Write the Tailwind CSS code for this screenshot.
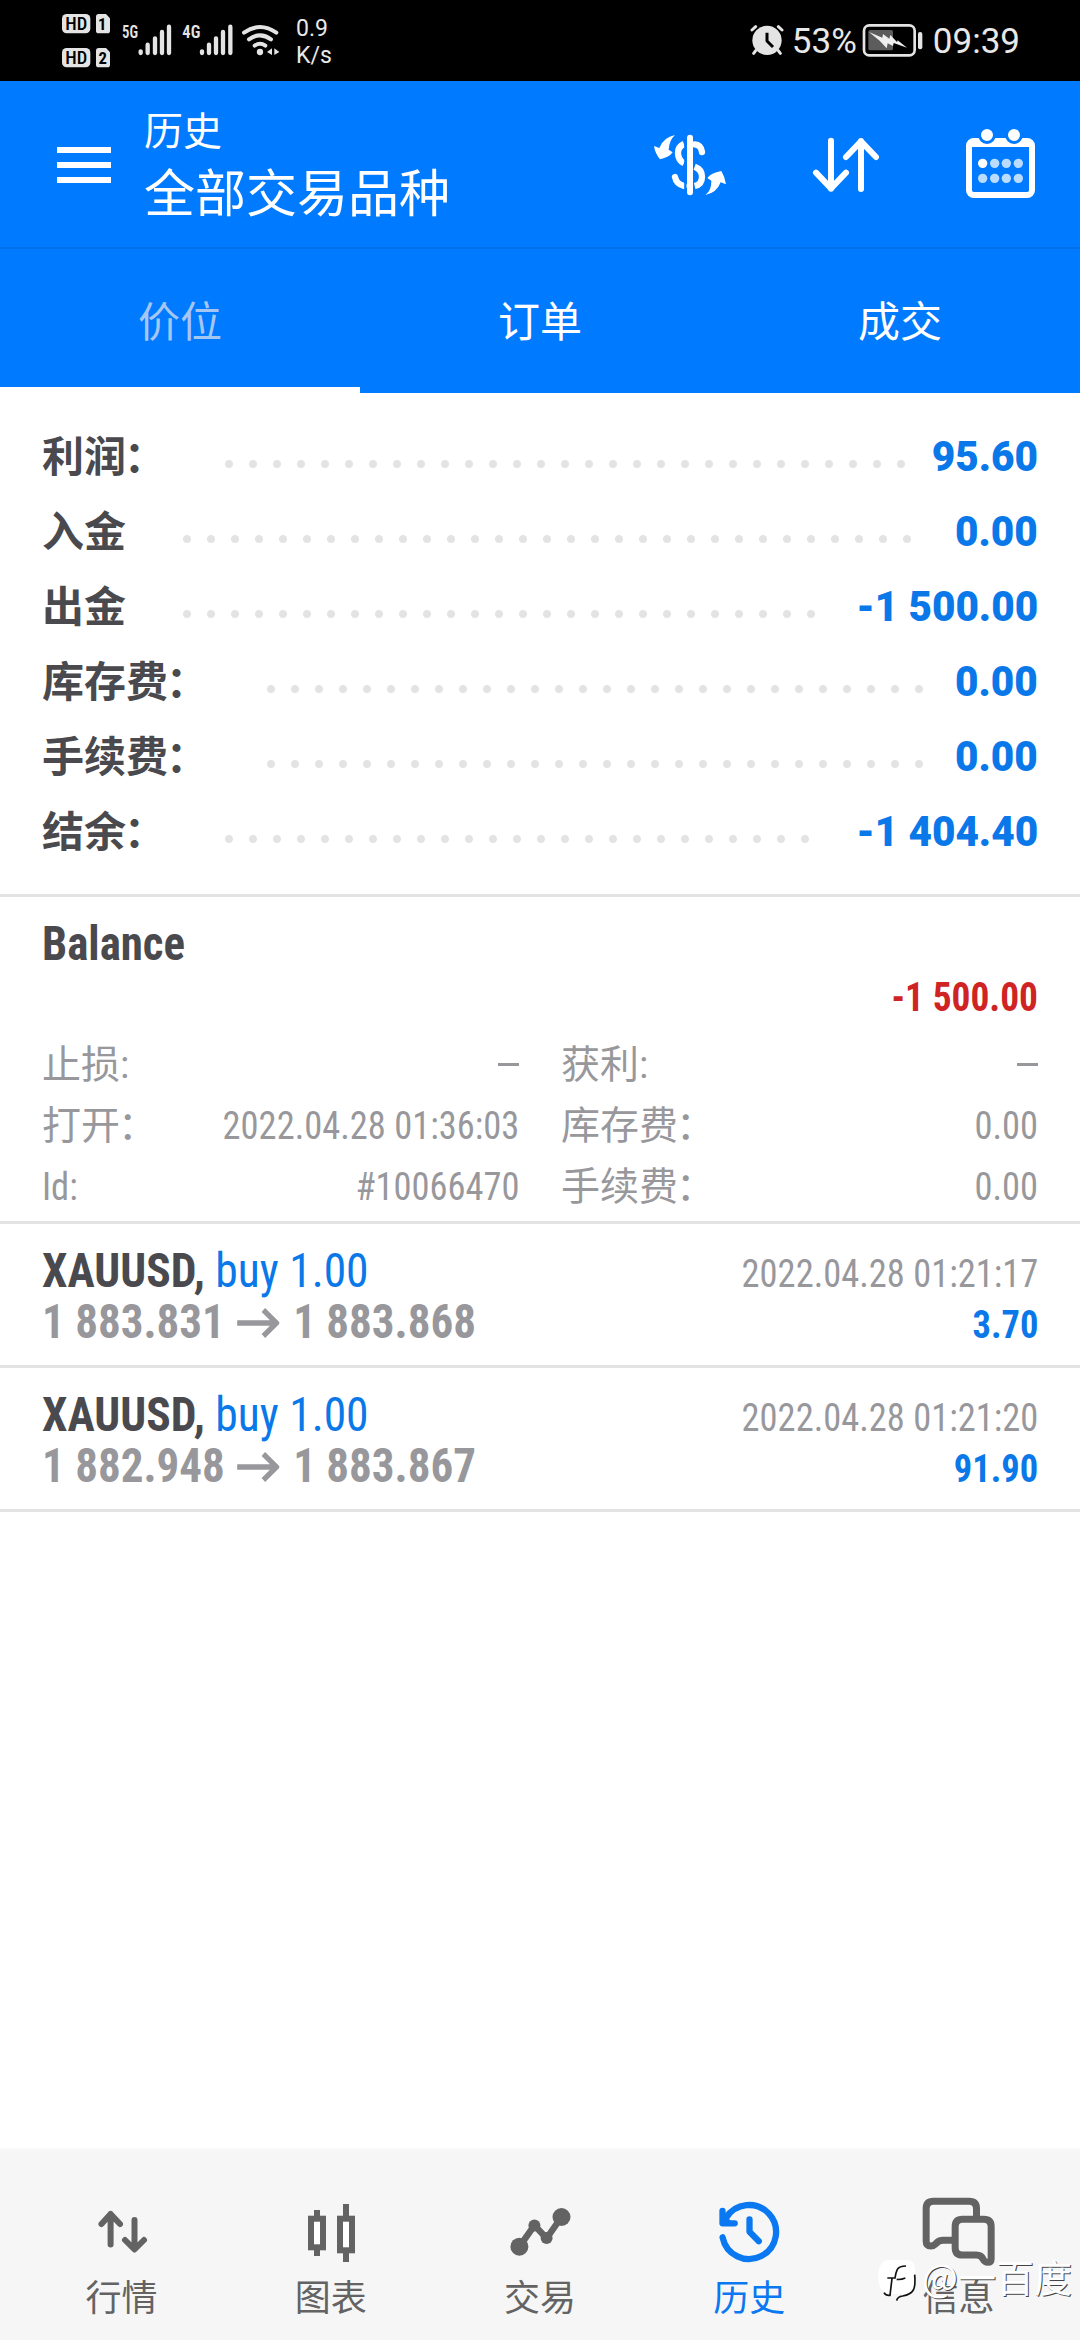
<!DOCTYPE html>
<html lang="zh-CN">
<head>
<meta charset="utf-8">
<title>历史</title>
<script src="https://cdn.jsdelivr.net/npm/@tailwindcss/browser@4"></script>
</head>
<body class="bg-white">
<div class="flex h-[2340px] w-[1080px] flex-col overflow-hidden bg-white font-['Roboto','Noto_Sans_CJK_SC',sans-serif] text-[#4a4a4e]">

  <!-- Status bar -->
  <div class="flex h-[81px] shrink-0 items-start bg-black text-[#e8e8e8]">
    <svg class="mt-[10px] ml-[60px] h-[60px] w-[52px]" viewBox="60 30 156 180">
      <g fill="#e4e4e4">
        <rect x="66" y="42" width="85" height="58" rx="14"/>
        <path d="M176 42h22l12 13v37q0 8-8 8h-26q-8 0-8-8v-42q0-8 8-8z"/>
        <rect x="66" y="144" width="85" height="58" rx="14"/>
        <path d="M176 144h22l12 13v37q0 8-8 8h-26q-8 0-8-8v-42q0-8 8-8z"/>
      </g>
      <g fill="#000" font-family="Roboto Condensed, Roboto" font-weight="500" font-size="53" text-anchor="middle">
        <text x="109" y="90" textLength="66" lengthAdjust="spacingAndGlyphs">HD</text>
        <text x="109" y="192" textLength="66" lengthAdjust="spacingAndGlyphs">HD</text>
        <text x="187" y="90" font-weight="700" font-size="50">1</text>
        <text x="188" y="192" font-weight="700" font-size="50">2</text>
      </g>
    </svg>
    <svg class="mt-[20px] ml-[8px] h-[40px] w-[53px]" viewBox="240 60 159 120">
      <text x="246" y="114" fill="#e4e4e4" font-family="Roboto Condensed, Roboto" font-weight="600" font-size="55" textLength="48" lengthAdjust="spacingAndGlyphs">5G</text>
      <path d="M302 154v5M323 134v25M345 115v44M366 96v63M387 80v79" stroke="#e4e4e4" stroke-width="13" stroke-linecap="round"/>
    </svg>
    <svg class="mt-[20px] ml-[7px] h-[40px] w-[55px]" viewBox="420 60 165 120">
      <text x="427" y="114" fill="#e4e4e4" font-family="Roboto Condensed, Roboto" font-weight="600" font-size="55" textLength="54" lengthAdjust="spacingAndGlyphs">4G</text>
      <path d="M486 154v5M507 134v25M528 115v44M549 96v63M571 80v79" stroke="#e4e4e4" stroke-width="13" stroke-linecap="round"/>
    </svg>
    <svg class="mt-[20px] ml-[5px] h-[40px] w-[42px]" viewBox="600 60 126 120">
      <g fill="none" stroke="#e4e4e4" stroke-width="12" stroke-linecap="round">
        <path d="M612 98Q660 64 709 98M627 118Q660 94 693 118M644 137Q660 126 676 137"/>
      </g>
      <circle cx="660" cy="156" r="9.500" fill="#e4e4e4"/>
      <path d="M696 145v20l-15-9zM703 145v20l15-9z" fill="#e4e4e4"/>
    </svg>
    <div class="mt-[15px] ml-[14px] text-[23px] leading-[27px]">0.9<br>K/s</div>
    <svg class="mt-[22px] ml-auto h-[36px] w-[36px]" viewBox="54 66 108 108">
      <circle cx="108" cy="121" r="44" fill="#e4e4e4"/>
      <path d="M63 90l11-10M142 80l11 10M74 152l-6 8M142 152l6 8" stroke="#e4e4e4" stroke-width="9" stroke-linecap="round"/>
      <path d="M108 98v25l18 18" fill="none" stroke="#000" stroke-width="9" stroke-linejoin="round"/>
    </svg>
    <div class="mt-[22px] ml-[7px] w-[69px] text-[35px] leading-[40px]">53%</div>
    <svg class="mt-[22px] h-[36px] w-[64px]" viewBox="390 66 192 108">
      <rect x="399" y="76" width="152" height="90" rx="16" fill="none" stroke="#e4e4e4" stroke-width="8"/>
      <rect x="412" y="90" width="74" height="61" rx="5" fill="#5c5c5c"/>
      <path d="M414 96L454 113 456 102 475 116 478 105 498 126 500 121 528 143 488 129 486 138 470 130 467 145 446 122z" fill="#efefef"/>
      <rect x="561" y="96" width="13" height="52" rx="6" fill="#e4e4e4"/>
    </svg>
    <div class="mt-[22px] mr-[60px] ml-[8px] text-[35px] leading-[40px]">09:39</div>
  </div>

  <!-- App bar -->
  <div class="flex h-[166px] shrink-0 items-center bg-[#007aff] pt-[2px] text-white">
    <div class="ml-[57px] flex w-[54px] flex-col gap-[9px]">
      <div class="h-[6px] bg-white"></div>
      <div class="h-[6px] bg-white"></div>
      <div class="h-[6px] bg-white"></div>
    </div>
    <div class="ml-[33px]">
      <div class="text-[39px] leading-[56px]">历史</div>
      <div class="pt-[4px] text-[51px] leading-[62px]">全部交易品种</div>
    </div>
    <svg class="ml-auto h-[80px] w-[80px]" viewBox="150 135 240 240">
      <g fill="none" stroke="#fff" stroke-width="19" stroke-linecap="round">
        <path d="M270 173v164" stroke-width="18"/>
        <path d="M284 193Q303 194 306 216"/>
        <path d="M252 192Q234 200 234 219Q234 240 252 250" stroke-linecap="butt"/>
        <path d="M284 260Q306 268 306 290Q306 313 284 318" stroke-linecap="butt"/>
        <path d="M225 291Q229 312 252 318"/>
      </g>
      <g fill="#fff">
        <path d="M225 165Q208 180 206 209L218 217Q208 232 180 238Q166 222 162 198L178 204Q190 172 225 165z"/>
        <path d="M316 345Q335 331 334 302L322 294Q332 279 364 273Q374 289 378 313L362 307Q350 339 316 345z"/>
      </g>
      <path d="M256 170v175" stroke="#007aff" stroke-width="7"/>
    </svg>
    <svg class="ml-[76px] h-[80px] w-[80px]" viewBox="618 135 240 240">
      <path d="M693 182v144M648 278l45 47 45-47M783 327V183M738 231l45-47 45 47" fill="none" stroke="#fff" stroke-width="18" stroke-linecap="round" stroke-linejoin="round"/>
    </svg>
    <svg class="mr-[40px] ml-[74px] h-[80px] w-[80px]" viewBox="1080 135 240 240">
      <rect x="1107" y="183" width="189" height="162" rx="14" fill="none" stroke="#fff" stroke-width="18"/>
      <path d="M1107 183h189v18h-189z" fill="#fff"/>
      <path d="M1116 222q0-12 12-12h147q12 0 12 12v30h-171z" fill="#007aff"/>
      <g fill="#fff" stroke="#007aff" stroke-width="9"><circle cx="1161" cy="165" r="22.500"/><circle cx="1242" cy="165" r="22.500"/></g>
      <circle cx="1148" cy="250" r="14" fill="#fff"/>
      <g fill="#b9dcff"><circle cx="1184" cy="250" r="14"/><circle cx="1219" cy="250" r="14"/><circle cx="1255" cy="250" r="14"/><circle cx="1148" cy="295" r="14"/><circle cx="1184" cy="295" r="14"/><circle cx="1219" cy="295" r="14"/><circle cx="1255" cy="295" r="14"/></g>
    </svg>
  </div>

  <!-- Tabs -->
  <div class="grid h-[146px] shrink-0 grid-cols-3 border-t-2 border-[#0070ea] bg-[#007aff] text-center text-[42px] leading-[138px] text-white">
    <div class="h-[144px] border-b-6 border-white pt-[5px] text-[#a6c6f2]">价位</div>
    <div class="pt-[5px]">订单</div>
    <div class="pt-[5px]">成交</div>
  </div>

  <!-- Summary -->
  <div class="shrink-0 border-b-3 border-[#e3e3e3] px-[42px] pt-[25px] pb-[26px] text-[42px] leading-[75px] font-bold">
    <div class="flex h-[75px]"><span class="mr-[49px] pt-[2px]">利润<span class="mr-0.5 -ml-0.5">：</span></span><i class="mt-[34px] h-[24px] w-[696px] bg-[radial-gradient(circle,#e3e3e3_3.5px,transparent_4.5px)] bg-[length:24px_24px]"></i><b class="ml-auto origin-right scale-x-[0.965] pt-px text-[#0a78e8]">95.60</b></div>
    <div class="flex h-[75px]"><span class="mr-[49px] pt-[2px]">入金</span><i class="mt-[34px] h-[24px] w-[744px] bg-[radial-gradient(circle,#e3e3e3_3.5px,transparent_4.5px)] bg-[length:24px_24px]"></i><b class="ml-auto origin-right scale-x-[0.965] pt-px text-[#0a78e8]">0.00</b></div>
    <div class="flex h-[75px]"><span class="mr-[49px] pt-[2px]">出金</span><i class="mt-[34px] h-[24px] w-[648px] bg-[radial-gradient(circle,#e3e3e3_3.5px,transparent_4.5px)] bg-[length:24px_24px]"></i><b class="ml-auto origin-right scale-x-[0.965] pt-px text-[#0a78e8]">-1 500.00</b></div>
    <div class="flex h-[75px]"><span class="mr-[49px] pt-[2px]">库存费<span class="mr-0.5 -ml-0.5">：</span></span><i class="mt-[34px] h-[24px] w-[672px] bg-[radial-gradient(circle,#e3e3e3_3.5px,transparent_4.5px)] bg-[length:24px_24px]"></i><b class="ml-auto origin-right scale-x-[0.965] pt-px text-[#0a78e8]">0.00</b></div>
    <div class="flex h-[75px]"><span class="mr-[49px] pt-[2px]">手续费<span class="mr-0.5 -ml-0.5">：</span></span><i class="mt-[34px] h-[24px] w-[672px] bg-[radial-gradient(circle,#e3e3e3_3.5px,transparent_4.5px)] bg-[length:24px_24px]"></i><b class="ml-auto origin-right scale-x-[0.965] pt-px text-[#0a78e8]">0.00</b></div>
    <div class="flex h-[75px]"><span class="mr-[49px] pt-[2px]">结余<span class="mr-0.5 -ml-0.5">：</span></span><i class="mt-[34px] h-[24px] w-[600px] bg-[radial-gradient(circle,#e3e3e3_3.5px,transparent_4.5px)] bg-[length:24px_24px]"></i><b class="ml-auto origin-right scale-x-[0.965] pt-px text-[#0a78e8]">-1 404.40</b></div>
  </div>

  <!-- Balance operation -->
  <div class="h-[327px] shrink-0 border-b-3 border-[#e3e3e3] px-[42px] pt-[20px] font-['Roboto_Condensed','Noto_Sans_CJK_SC',sans-serif]">
    <div class="origin-left scale-x-[0.935] text-[48px] leading-[54px] font-bold">Balance</div>
    <div class="origin-right scale-x-[0.935] text-right text-[40px] leading-[54px] font-bold text-[#d02424]">-1 500.00</div>
    <div class="mt-[10px] grid grid-cols-2 gap-x-[42px] text-[39px] leading-[61px] text-[#98989c]">
      <div class="flex h-[61px] justify-between"><span>止损:</span><span class="mt-[28px] h-[3px] w-[21px] bg-[#98989c]"></span></div>
      <div class="flex h-[61px] justify-between"><span>获利:</span><span class="mt-[28px] h-[3px] w-[21px] bg-[#98989c]"></span></div>
      <div class="flex h-[61px] justify-between"><span>打开<span class="-ml-0.5">：</span></span><span class="origin-right scale-x-[0.935]">2022.04.28 01:36:03</span></div>
      <div class="flex h-[61px] justify-between"><span>库存费<span class="-ml-0.5">：</span></span><span class="origin-right scale-x-[0.935]">0.00</span></div>
      <div class="flex h-[61px] justify-between"><span class="origin-left scale-x-[0.935]">Id:</span><span class="origin-right scale-x-[0.935]">#10066470</span></div>
      <div class="flex h-[61px] justify-between"><span>手续费<span class="-ml-0.5">：</span></span><span class="origin-right scale-x-[0.935]">0.00</span></div>
    </div>
  </div>

  <!-- Positions -->
  <div class="h-[144px] shrink-0 border-b-3 border-[#e3e3e3] px-[42px] pt-[21px] font-['Roboto_Condensed',sans-serif] text-[48px] leading-[51px]">
    <div class="flex h-[51px] items-baseline justify-between">
      <span class="origin-left scale-x-[0.948]"><b class="font-bold">XAUUSD,</b> <span class="text-[#0a78e8]">buy 1.00</span></span>
      <span class="origin-right scale-x-[0.935] text-[39px] text-[#98989c]">2022.04.28 01:21:17</span>
    </div>
    <div class="flex h-[51px] items-baseline justify-between font-bold text-[#98989c]">
      <span class="flex origin-left scale-x-[0.938] items-center">1 883.831<svg class="mr-[15px] ml-[13px] h-[32px] w-[45px]" viewBox="0 0 45 32"><path d="M0 17h42M28 4l14 13-14 13" fill="none" stroke="#98989c" stroke-width="5.500"/></svg>1 883.868</span>
      <span class="origin-right scale-x-[0.935] text-[39px] text-[#0a78e8]">3.70</span>
    </div>
  </div>
  <div class="h-[144px] shrink-0 border-b-3 border-[#e3e3e3] px-[42px] pt-[21px] font-['Roboto_Condensed',sans-serif] text-[48px] leading-[51px]">
    <div class="flex h-[51px] items-baseline justify-between">
      <span class="origin-left scale-x-[0.948]"><b class="font-bold">XAUUSD,</b> <span class="text-[#0a78e8]">buy 1.00</span></span>
      <span class="origin-right scale-x-[0.935] text-[39px] text-[#98989c]">2022.04.28 01:21:20</span>
    </div>
    <div class="flex h-[51px] items-baseline justify-between font-bold text-[#98989c]">
      <span class="flex origin-left scale-x-[0.938] items-center">1 882.948<svg class="mr-[15px] ml-[13px] h-[32px] w-[45px]" viewBox="0 0 45 32"><path d="M0 17h42M28 4l14 13-14 13" fill="none" stroke="#98989c" stroke-width="5.500"/></svg>1 883.867</span>
      <span class="origin-right scale-x-[0.935] text-[39px] text-[#0a78e8]">91.90</span>
    </div>
  </div>

  <!-- Bottom navigation -->
  <div class="relative mt-auto grid h-[192px] shrink-0 grid-cols-5 border-t-2 border-[#fafafa] bg-[#f6f6f6] px-[17px] pt-[46px] text-[36px] leading-[54px] text-[#636363]">
    <div class="flex flex-col items-center">
      <svg class="h-[72px] w-[72px]" viewBox="0 0 72 72"><path d="M24.600 48.500V18M15.500 28l9.100-10L34 28M48.500 24v29M39 44l9.500 9.500L58 44" fill="none" stroke="#636363" stroke-width="6" stroke-linecap="round" stroke-linejoin="round"/></svg>
      <span class="pt-[4px]">行情</span>
    </div>
    <div class="flex flex-col items-center">
      <svg class="h-[72px] w-[72px]" viewBox="0 0 72 72"><path d="M22 14v46M51 8v58" stroke="#636363" stroke-width="6"/><rect x="16" y="22.700" width="12" height="28.600" fill="#fff" stroke="#636363" stroke-width="6"/><rect x="45" y="22.700" width="12" height="31.600" fill="#fff" stroke="#636363" stroke-width="6"/></svg>
      <span class="pt-[4px]">图表</span>
    </div>
    <div class="flex flex-col items-center">
      <svg class="h-[72px] w-[72px]" viewBox="0 0 72 72"><path d="M15.400 50.700l15-21.400 12.200 13 14.900-21.300" fill="none" stroke="#636363" stroke-width="6.500"/><g fill="#636363"><circle cx="15.400" cy="50.700" r="9"/><circle cx="57.500" cy="21" r="9"/><circle cx="30.400" cy="29.600" r="6"/><circle cx="42.600" cy="42" r="6"/></g></svg>
      <span class="pt-[4px]">交易</span>
    </div>
    <div class="flex flex-col items-center text-[#0a78f0]">
      <svg class="h-[72px] w-[72px]" viewBox="0 0 72 72"><g fill="none" stroke="#0a78f0" stroke-width="6.300" stroke-linecap="round" stroke-linejoin="round"><path d="M9.600 41.300A27 27 0 1 0 13 22M9.500 14.800v12.500h12.200M36.500 23.500v12.300l9.300 9.400"/></g><path d="M8 15l13 13H8z" fill="#0a78f0"/></svg>
      <span class="pt-[4px]">历史</span>
    </div>
    <div class="flex flex-col items-center">
      <svg class="h-[72px] w-[72px] overflow-visible" viewBox="964.500 198 216 216"><g fill="none" stroke="#636363" stroke-width="21"><path d="M1128 262v-26q0-22-22-22h-107q-22 0-22 22v98q0 14 14 14 8 0 15-7 9-10 22-10h30"/><path d="M1086 268h64q22 0 22 22v96q0 11-10 11-9 0-14-9-6-13-20-13h-42q-22 0-22-22v-63q0-22 22-22z"/></g></svg>
      <span class="pt-[4px]">信息</span>
    </div>

    <!-- Watermark laid over the bar -->
    <div class="absolute top-[108px] left-[878px] flex items-center">
      <svg class="h-[46px] w-[44px]" viewBox="0 0 132 138">
        <path d="M28 6h56q27 0 27 27v48q0 27-27 27H38q-26-4-34-26Q-2 64 2 38 6 10 28 6z" fill="#fff"/>
        <path d="M84 24q-20 0-26 10-5 10-7 26H28M56 64q12 2 26-4M42 62q-3 24-6 50Q24 114 18 104M110 50q3 34-4 46-8 14-32 18-16 2-18 14" fill="none" stroke="#111" stroke-width="5"/>
      </svg>
      <span class="-mt-[10px] font-['Noto_Sans_CJK_SC',sans-serif] text-[38px] leading-[46px] text-white [text-shadow:1px_1px_0px_#444]">@一百度</span>
    </div>
  </div>
</div>
</body>
</html>
